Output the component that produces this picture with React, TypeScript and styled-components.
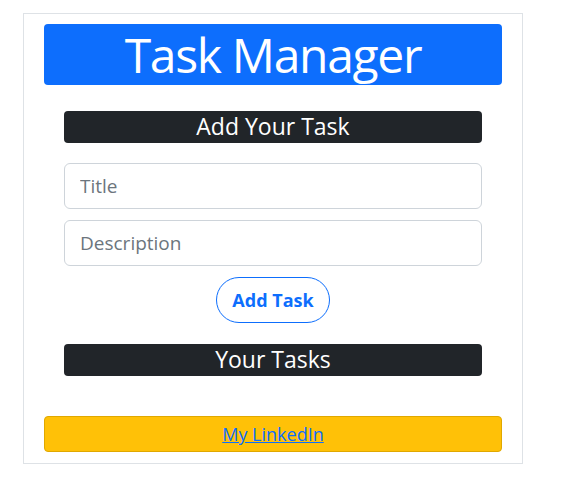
import React, { useState } from "react";
import styled, { createGlobalStyle } from "styled-components";

const GlobalStyle = createGlobalStyle`
  body {
    margin: 0;
    background: #ffffff;
    font-family: "Open Sans", "Noto Sans", sans-serif;
    color: #212529;
  }
  * {
    box-sizing: border-box;
  }
`;

export default function App() {
  const [title, setTitle] = useState("");
  const [description, setDescription] = useState("");

  return (
    <>
      <GlobalStyle />
      <Page>
        <Header>Task Manager</Header>
        <Section>
          <SectionTitle>Add Your Task</SectionTitle>
          <Form onSubmit={(e) => e.preventDefault()}>
            <Field
              type="text"
              placeholder="Title"
              value={title}
              onChange={(e) => setTitle(e.target.value)}
            />
            <Field
              type="text"
              placeholder="Description"
              value={description}
              onChange={(e) => setDescription(e.target.value)}
            />
            <AddButton type="submit">Add Task</AddButton>
          </Form>
          <SectionTitle>Your Tasks</SectionTitle>
        </Section>
        <Footer>
          <FooterLink href="#">My LinkedIn</FooterLink>
        </Footer>
      </Page>
    </>
  );
}

// Styled Components
const Page = styled.div`
  width: 500px;
  margin: 13px 0 0 23px;
  padding: 10px 20px 11px;
  border: 1px solid #dee2e6;
  display: flex;
  flex-direction: column;
`;

const Header = styled.h1`
  margin: 0;
  height: 61px;
  background: #0d6efd;
  color: #ffffff;
  border-radius: 4px;
  font-size: 48px;
  font-weight: 400;
  letter-spacing: -1.3px;
  line-height: 61px;
  text-align: center;
`;

const Section = styled.div`
  margin: 26px 20px 0;
  display: flex;
  flex-direction: column;
`;

const SectionTitle = styled.h2`
  margin: 0;
  height: 32px;
  background: #212529;
  color: #ffffff;
  border-radius: 4px;
  font-size: 23px;
  font-weight: 400;
  line-height: 31px;
  text-align: center;
`;

const Form = styled.form`
  margin: 20px 0 21px;
  display: flex;
  flex-direction: column;
  align-items: center;
  gap: 11px;
`;

const Field = styled.input`
  width: 100%;
  height: 46px;
  padding: 0 15px;
  border: 1px solid #ced4da;
  border-radius: 6px;
  font-family: inherit;
  font-size: 19px;
  color: #212529;
  outline: none;

  &::placeholder {
    color: #6c757d;
  }
`;

const AddButton = styled.button`
  height: 46px;
  padding: 0 15px;
  background: transparent;
  border: 1px solid #0d6efd;
  border-radius: 24px;
  color: #0d6efd;
  font-family: inherit;
  font-size: 18px;
  font-weight: 700;
  cursor: pointer;
`;

const Footer = styled.div`
  margin-top: 40px;
  height: 36px;
  background: #ffc107;
  border: 1px solid #e0a800;
  border-radius: 4px;
  display: flex;
  align-items: center;
  justify-content: center;
`;

const FooterLink = styled.a`
  color: #0d6efd;
  font-size: 18px;
  text-decoration: underline;
`;
